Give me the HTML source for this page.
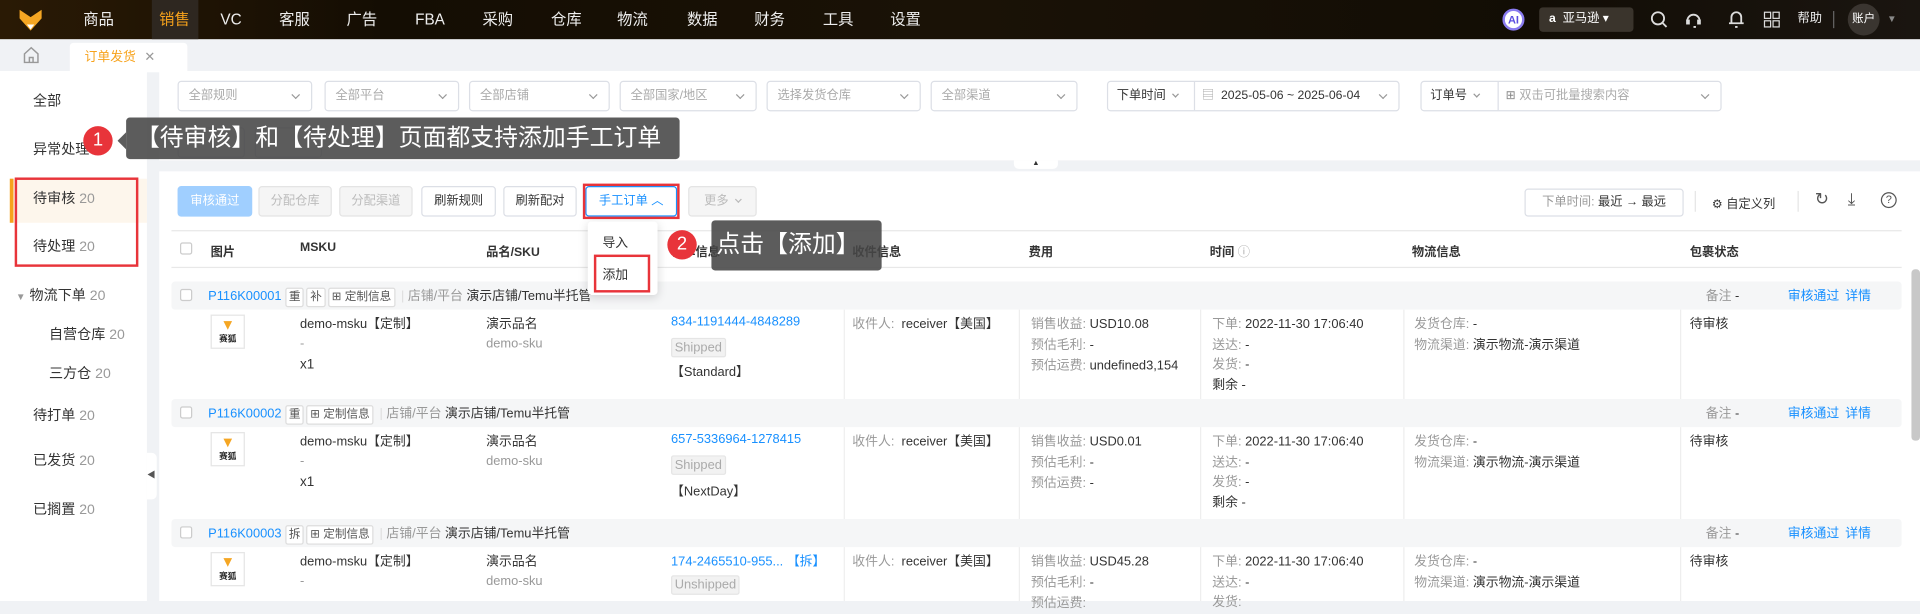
<!DOCTYPE html>
<html><head><meta charset="utf-8"><style>
*{box-sizing:border-box;margin:0;padding:0}
html,body{width:1920px;height:601px;overflow:hidden;background:#f0f2f5}
body{font-family:"Liberation Sans","Noto Sans CJK SC",sans-serif;color:#333}
#s{position:absolute;left:0;top:0;width:1568px;height:491px;transform:scale(1.22449,1.2240);transform-origin:0 0;font-size:10.5px}
.a{position:absolute;white-space:nowrap}
.nav{left:0;top:0;width:1568px;height:32px;background:linear-gradient(90deg,#2a1a05 0%,#140d03 20%,#1a1206 50%,#120d05 80%,#1a1510 100%)}
.nav .m{position:absolute;top:0;height:32px;line-height:32px;color:#eee;font-size:12.5px}
.sel{position:absolute;height:25px;border:1px solid #dcdfe6;border-radius:3px;background:#fff;color:#aaa;line-height:23px;padding-left:8px;font-size:10px}
.sel:after{content:"";position:absolute;right:10px;top:8px;width:4px;height:4px;border-right:1px solid #999;border-bottom:1px solid #999;transform:rotate(45deg)}
.chev{display:inline-block;width:4px;height:4px;border-right:1px solid #999;border-bottom:1px solid #999;transform:rotate(45deg);margin:0 0 2px 6px}
.btn{position:absolute;top:152px;height:25px;border:1px solid #dcdfe6;border-radius:3px;background:#fff;line-height:23px;text-align:center;font-size:10px;color:#333}
.dis{background:#f5f5f5;color:#bbb;border-color:#e4e4e4}
.side{position:absolute;left:27px;font-size:11.5px;color:#333}
.cnt{color:#999}
.g{color:#999}
.b{color:#1890ff}
.gh{position:absolute;left:140px;width:1413px;height:23px;background:#f5f6f7;border-radius:3px}
.cb{position:absolute;width:10px;height:10px;border:1px solid #ccc;border-radius:2px;background:#fff}
.tag{display:inline-block;border:1px solid #ddd;border-radius:2px;padding:0 2px;line-height:14px;background:#fff;color:#555;font-size:9.5px;margin-right:2px}
.vl{position:absolute;width:1px;background:#eee}
.img{position:absolute;left:172px;width:28px;height:28px;border:1px solid #e5e5e5;background:#fff;text-align:center;font-size:7px;font-weight:bold;color:#222}
.st{display:inline-block;background:#f2f2f2;border:1px solid #e5e5e5;color:#aaa;border-radius:2px;padding:0 2px;line-height:14px}
.tip{position:absolute;background:rgba(70,70,70,.88);color:#fff;border-radius:3px}
.num{position:absolute;width:24px;height:24px;border-radius:50%;background:#e8343a;color:#fff;text-align:center;line-height:24px;font-size:15px}
.red{position:absolute;border:2px solid #e8343a}
</style></head><body><div id="s">
<div class="a nav">
<svg style="position:absolute;left:15px;top:8px" width="20" height="17" viewBox="0 0 20 17"><path d="M1 0 L10 6 L19 0 L19 7 L10 17 L1 7Z" fill="#f5a623"/><path d="M7 12 L10 16 L13 12Z" fill="#fff"/></svg>
<div style="position:absolute;left:124px;top:0;width:38px;height:32px;background:#2e2720"></div>
<span class="m" style="left:68px">商品</span><span class="m" style="left:130px;color:#f7a21b">销售</span><span class="m" style="left:180px">VC</span><span class="m" style="left:228px">客服</span><span class="m" style="left:283px">广告</span><span class="m" style="left:339px">FBA</span><span class="m" style="left:394px">采购</span><span class="m" style="left:450px">仓库</span><span class="m" style="left:504px">物流</span><span class="m" style="left:561px">数据</span><span class="m" style="left:616px">财务</span><span class="m" style="left:672px">工具</span><span class="m" style="left:727px">设置</span>
<div style="position:absolute;left:1227px;top:7px;width:18px;height:18px;border-radius:50%;background:#fff;border:2px solid #8a7cf0;color:#5b4de0;font-size:9px;font-weight:bold;text-align:center;line-height:14px">AI</div>
<div style="position:absolute;left:1257px;top:6px;width:77px;height:20px;background:#3a342c;border-radius:3px;color:#fff;font-size:10px;line-height:20px;padding-left:8px"><b>a</b>&nbsp; 亚马逊 ▾</div>
<svg style="position:absolute;left:1348px;top:9px" width="14" height="14"><circle cx="6" cy="6" r="5" fill="none" stroke="#ddd" stroke-width="1.5"/><path d="M10 10 L13 13" stroke="#ddd" stroke-width="1.5"/></svg>
<svg style="position:absolute;left:1376px;top:8px" width="14" height="16"><path d="M2 9 A5 5 0 0 1 12 9 M7 14 L9 14" fill="none" stroke="#ddd" stroke-width="1.5"/><rect x="1" y="8" width="3" height="4" fill="#ddd"/><rect x="10" y="8" width="3" height="4" fill="#ddd"/></svg>
<svg style="position:absolute;left:1411px;top:8px" width="14" height="16"><path d="M3 11 L3 6 A4 4 0 0 1 11 6 L11 11 Z M1 11 L13 11 M6 14 L8 14" fill="none" stroke="#ddd" stroke-width="1.5"/></svg>
<svg style="position:absolute;left:1440px;top:9px" width="14" height="14"><rect x="1" y="1" width="5" height="5" fill="none" stroke="#ddd"/><rect x="8" y="1" width="5" height="5" fill="none" stroke="#ddd"/><rect x="1" y="8" width="5" height="5" fill="none" stroke="#ddd"/><rect x="8" y="8" width="5" height="5" fill="none" stroke="#ddd"/></svg>
<span class="m" style="left:1468px;font-size:10px">帮助</span>
<div style="position:absolute;left:1497px;top:9px;width:1px;height:14px;background:#666"></div>
<div style="position:absolute;left:1509px;top:3px;width:26px;height:26px;border-radius:50%;background:#3a3530;color:#fff;font-size:9.5px;text-align:center;line-height:26px">账户</div>
<span class="m" style="left:1541px;font-size:8px;color:#888">▼</span>
</div>
<svg class="a" style="left:19px;top:38px" width="13" height="14"><path d="M1 6 L6.5 1 L12 6 L12 13 L1 13Z M5 13 L5 9 L8 9 L8 13" fill="none" stroke="#999" stroke-width="1.2"/></svg>
<div class="a" style="left:57px;top:35px;width:96px;height:24px;background:#fff;border-radius:3px 3px 0 0;color:#f7a21b;font-size:10.5px;line-height:24px;padding-left:12px">订单发货 <span style="color:#999;margin-left:4px">✕</span></div>
<div class="a" style="left:0;top:58px;width:120px;height:433px;background:#fff"></div>
<div class="a" style="left:8px;top:146px;width:112px;height:36px;background:#fdf6ec"></div>
<div class="a" style="left:8px;top:146px;width:3px;height:36px;background:#f7a21b"></div>
<span class="side" style="top:74px">全部</span>
<span class="side" style="top:114px">异常处理</span>
<span class="side" style="top:154px">待审核 <span class="cnt">20</span></span>
<span class="side" style="top:193px">待处理 <span class="cnt">20</span></span>
<span class="side" style="top:233px;left:13px"><span style="color:#999;font-size:8px">▼</span> 物流下单 <span class="cnt">20</span></span>
<span class="side" style="top:265px;left:40px">自营仓库 <span class="cnt">20</span></span>
<span class="side" style="top:297px;left:40px">三方仓 <span class="cnt">20</span></span>
<span class="side" style="top:331px">待打单 <span class="cnt">20</span></span>
<span class="side" style="top:368px">已发货 <span class="cnt">20</span></span>
<span class="side" style="top:408px">已搁置 <span class="cnt">20</span></span>
<div class="red" style="left:12px;top:145px;width:101px;height:73px"></div>
<div class="a" style="left:120px;top:370px;width:8px;height:38px;background:#fff;border-radius:0 4px 4px 0;font-size:7px;color:#555;line-height:38px">◀</div>
<div class="a" style="left:130px;top:58px;width:1438px;height:73px;background:#fff"></div>
<div class="sel" style="left:145px;top:66px;width:110px">全部规则</div>
<div class="sel" style="left:265px;top:66px;width:110px">全部平台</div>
<div class="sel" style="left:383px;top:66px;width:115px">全部店铺</div>
<div class="sel" style="left:506px;top:66px;width:112px">全部国家/地区</div>
<div class="sel" style="left:626px;top:66px;width:126px">选择发货仓库</div>
<div class="sel" style="left:760px;top:66px;width:120px">全部渠道</div>
<div class="sel" style="left:904px;top:66px;width:239px;color:#333;padding-left:0"><span style="display:inline-block;width:71px;border-right:1px solid #dcdfe6;padding-left:7px">下单时间<span class="chev"></span></span>&nbsp; <span style="color:#aaa">▤</span>&nbsp; 2025-05-06 ~ 2025-06-04</div>
<div class="sel" style="left:1160px;top:66px;width:246px;padding-left:0"><span style="display:inline-block;width:63px;border-right:1px solid #dcdfe6;padding-left:7px;color:#333">订单号<span class="chev"></span></span>&nbsp; <span style="color:#888">⊞</span> 双击可批量搜索内容</div>
<div class="a" style="left:145px;top:104px;width:55px;height:25px;border:1px solid #dcdfe6;border-radius:3px"></div>
<div class="a" style="left:208px;top:104px;width:55px;height:25px;border:1px solid #dcdfe6;border-radius:3px"></div>
<div class="a" style="left:828px;top:131px;width:36px;height:7px;background:#fff;border-radius:0 0 4px 4px;font-size:6px;text-align:center;line-height:6px;color:#333">▲</div>
<div class="a" style="left:130px;top:140px;width:1438px;height:351px;background:#fff"></div>
<div class="btn" style="left:145px;width:61px;background:#a0cfff;border-color:#a0cfff;color:#fff">审核通过</div>
<div class="btn dis" style="left:211px;width:60px">分配仓库</div>
<div class="btn dis" style="left:277px;width:60px">分配渠道</div>
<div class="btn" style="left:344px;width:61px">刷新规则</div>
<div class="btn" style="left:411px;width:60px">刷新配对</div>
<div class="btn" style="left:478px;width:75px;color:#1890ff;border-color:#1890ff">手工订单 ︿</div>
<div class="red" style="left:476px;top:150px;width:79px;height:29px"></div>
<div class="btn dis" style="left:562px;width:56px">更多<span class="chev" style="border-color:#bbb"></span></div>
<div class="btn" style="left:1245px;top:154px;width:130px;height:23px;line-height:21px"><span class="g">下单时间:</span> 最近 → 最远</div>
<div class="a" style="left:1384px;top:156px;width:1px;height:17px;background:#e5e5e5"></div>
<span class="a" style="left:1398px;top:158px;font-size:10px">⚙ 自定义列</span>
<div class="a" style="left:1468px;top:156px;width:1px;height:17px;background:#e5e5e5"></div>
<span class="a" style="left:1482px;top:154px;font-size:14px;color:#555">↻</span>
<span class="a" style="left:1509px;top:154px;font-size:14px;color:#555">⤓</span>
<div class="a" style="left:1536px;top:157px;width:13px;height:13px;border:1.3px solid #555;border-radius:50%;font-size:9px;text-align:center;line-height:11px;color:#555">?</div>
<div class="a" style="left:140px;top:188px;width:1413px;height:1px;background:#e8e8e8"></div>
<div class="cb" style="left:147px;top:198px"></div>
<b class="a" style="left:172px;top:197px;font-size:10px">图片</b>
<b class="a" style="left:245px;top:197px;font-size:10px">MSKU</b>
<b class="a" style="left:397px;top:197px;font-size:10px">品名/SKU</b>
<b class="a" style="left:548px;top:197px;font-size:10px">订单信息</b>
<b class="a" style="left:696px;top:197px;font-size:10px">收件信息</b>
<b class="a" style="left:840px;top:197px;font-size:10px">费用</b>
<b class="a" style="left:988px;top:197px;font-size:10px">时间 <span style="font-weight:normal;color:#aaa">ⓘ</span></b>
<b class="a" style="left:1153px;top:197px;font-size:10px">物流信息</b>
<b class="a" style="left:1380px;top:197px;font-size:10px">包裹状态</b>
<div class="a" style="left:140px;top:218px;width:1413px;height:1px;background:#e8e8e8"></div>
<div class="a" style="left:1561px;top:220px;width:7px;height:140px;background:#c8c8c8;border-radius:3px"></div>
<div class="gh" style="top:230px"></div>
<div class="gh" style="top:326px"></div>
<div class="gh" style="top:424px"></div>
<div class="vl" style="left:689px;top:253px;height:73px"></div><div class="vl" style="left:832px;top:253px;height:73px"></div><div class="vl" style="left:980px;top:253px;height:73px"></div><div class="vl" style="left:1146px;top:253px;height:73px"></div><div class="vl" style="left:1372px;top:253px;height:73px"></div>
<div class="vl" style="left:689px;top:349px;height:75px"></div><div class="vl" style="left:832px;top:349px;height:75px"></div><div class="vl" style="left:980px;top:349px;height:75px"></div><div class="vl" style="left:1146px;top:349px;height:75px"></div><div class="vl" style="left:1372px;top:349px;height:75px"></div>
<div class="vl" style="left:689px;top:447px;height:44px"></div><div class="vl" style="left:832px;top:447px;height:44px"></div><div class="vl" style="left:980px;top:447px;height:44px"></div><div class="vl" style="left:1146px;top:447px;height:44px"></div><div class="vl" style="left:1372px;top:447px;height:44px"></div>
<div class="cb" style="left:147px;top:236px"></div>
<span class="a" style="left:170px;top:234px"><span class="b">P116K00001</span> <span class="tag">重</span><span class="tag">补</span><span class="tag">⊞ 定制信息</span> <span style="color:#ddd">|</span> <span class="g">店铺/平台</span> 演示店铺/Temu半托管</span>
<span class="a" style="left:1393px;top:234px"><span class="g">备注</span> -</span><span class="a b" style="left:1460px;top:234px">审核通过</span><span class="a b" style="left:1507px;top:234px">详情</span>
<div class="img" style="top:257px"><div style="color:#f5a623;font-size:12px;line-height:14px">▼</div>赛狐</div>
<span class="a" style="left:245px;top:257px">demo-msku【定制】</span><span class="a g" style="left:245px;top:275px">-</span><span class="a" style="left:245px;top:292px;font-size:11px">x1</span>
<span class="a" style="left:397px;top:257px">演示品名</span><span class="a g" style="left:397px;top:275px">demo-sku</span>
<span class="a b" style="left:548px;top:257px">834-1191444-4848289</span><span class="a st" style="left:548px;top:276px">Shipped</span><span class="a" style="left:548px;top:296px">【Standard】</span>
<span class="a" style="left:696px;top:257px"><span class="g">收件人:</span>&nbsp; receiver【美国】</span>
<span class="a" style="left:842px;top:257px;line-height:17px"><span class="g">销售收益:</span> USD10.08<br><span class="g">预估毛利:</span> -<br><span class="g">预估运费:</span> undefined3,154</span>
<span class="a" style="left:990px;top:257px;line-height:16.5px"><span class="g">下单:</span> 2022-11-30 17:06:40<br><span class="g">送达:</span> -<br><span class="g">发货:</span> -<br>剩余 -</span>
<span class="a" style="left:1155px;top:257px;line-height:17px"><span class="g">发货仓库:</span> -<br><span class="g">物流渠道:</span> 演示物流-演示渠道</span>
<span class="a" style="left:1380px;top:257px">待审核</span>
<div class="cb" style="left:147px;top:332px"></div>
<span class="a" style="left:170px;top:330px"><span class="b">P116K00002</span> <span class="tag">重</span><span class="tag">⊞ 定制信息</span> <span style="color:#ddd">|</span> <span class="g">店铺/平台</span> 演示店铺/Temu半托管</span>
<span class="a" style="left:1393px;top:330px"><span class="g">备注</span> -</span><span class="a b" style="left:1460px;top:330px">审核通过</span><span class="a b" style="left:1507px;top:330px">详情</span>
<div class="img" style="top:353px"><div style="color:#f5a623;font-size:12px;line-height:14px">▼</div>赛狐</div>
<span class="a" style="left:245px;top:353px">demo-msku【定制】</span><span class="a g" style="left:245px;top:371px">-</span><span class="a" style="left:245px;top:388px;font-size:11px">x1</span>
<span class="a" style="left:397px;top:353px">演示品名</span><span class="a g" style="left:397px;top:371px">demo-sku</span>
<span class="a b" style="left:548px;top:353px">657-5336964-1278415</span><span class="a st" style="left:548px;top:372px">Shipped</span><span class="a" style="left:548px;top:394px">【NextDay】</span>
<span class="a" style="left:696px;top:353px"><span class="g">收件人:</span>&nbsp; receiver【美国】</span>
<span class="a" style="left:842px;top:353px;line-height:17px"><span class="g">销售收益:</span> USD0.01<br><span class="g">预估毛利:</span> -<br><span class="g">预估运费:</span> -</span>
<span class="a" style="left:990px;top:353px;line-height:16.5px"><span class="g">下单:</span> 2022-11-30 17:06:40<br><span class="g">送达:</span> -<br><span class="g">发货:</span> -<br>剩余 -</span>
<span class="a" style="left:1155px;top:353px;line-height:17px"><span class="g">发货仓库:</span> -<br><span class="g">物流渠道:</span> 演示物流-演示渠道</span>
<span class="a" style="left:1380px;top:353px">待审核</span>
<div class="cb" style="left:147px;top:430px"></div>
<span class="a" style="left:170px;top:428px"><span class="b">P116K00003</span> <span class="tag">拆</span><span class="tag">⊞ 定制信息</span> <span style="color:#ddd">|</span> <span class="g">店铺/平台</span> 演示店铺/Temu半托管</span>
<span class="a" style="left:1393px;top:428px"><span class="g">备注</span> -</span><span class="a b" style="left:1460px;top:428px">审核通过</span><span class="a b" style="left:1507px;top:428px">详情</span>
<div class="img" style="top:451px"><div style="color:#f5a623;font-size:12px;line-height:14px">▼</div>赛狐</div>
<span class="a" style="left:245px;top:451px">demo-msku【定制】</span><span class="a g" style="left:245px;top:469px">-</span>
<span class="a" style="left:397px;top:451px">演示品名</span><span class="a g" style="left:397px;top:469px">demo-sku</span>
<span class="a b" style="left:548px;top:451px">174-2465510-955... 【拆】</span><span class="a st" style="left:548px;top:470px">Unshipped</span>
<span class="a" style="left:696px;top:451px"><span class="g">收件人:</span>&nbsp; receiver【美国】</span>
<span class="a" style="left:842px;top:451px;line-height:17px"><span class="g">销售收益:</span> USD45.28<br><span class="g">预估毛利:</span> -<br><span class="g">预估运费:</span></span>
<span class="a" style="left:990px;top:451px;line-height:16.5px"><span class="g">下单:</span> 2022-11-30 17:06:40<br><span class="g">送达:</span> -<br><span class="g">发货:</span></span>
<span class="a" style="left:1155px;top:451px;line-height:17px"><span class="g">发货仓库:</span> -<br><span class="g">物流渠道:</span> 演示物流-演示渠道</span>
<span class="a" style="left:1380px;top:451px">待审核</span>
<div class="a" style="left:480px;top:181px;width:57px;height:60px;background:#fff;box-shadow:0 2px 8px rgba(0,0,0,.15);border-radius:3px"></div>
<span class="a" style="left:492px;top:191px">导入</span>
<span class="a" style="left:492px;top:217px">添加</span>
<div class="red" style="left:485px;top:208px;width:46px;height:31px"></div>
<div class="tip" style="left:103px;top:96px;width:452px;height:34px;font-size:19.5px;line-height:34px;padding-left:8px">【待审核】和【待处理】页面都支持添加手工订单</div>
<div class="a" style="left:96px;top:108px;width:0;height:0;border:7px solid transparent;border-right-color:rgba(70,70,70,.88);border-left:0"></div>
<div class="num" style="left:68px;top:103px">1</div>
<div class="tip" style="left:581px;top:180px;width:139px;height:41px;font-size:19.5px;line-height:41px;padding-left:4px">点击【添加】</div>
<div class="num" style="left:545px;top:188px">2</div>
</div></body></html>
